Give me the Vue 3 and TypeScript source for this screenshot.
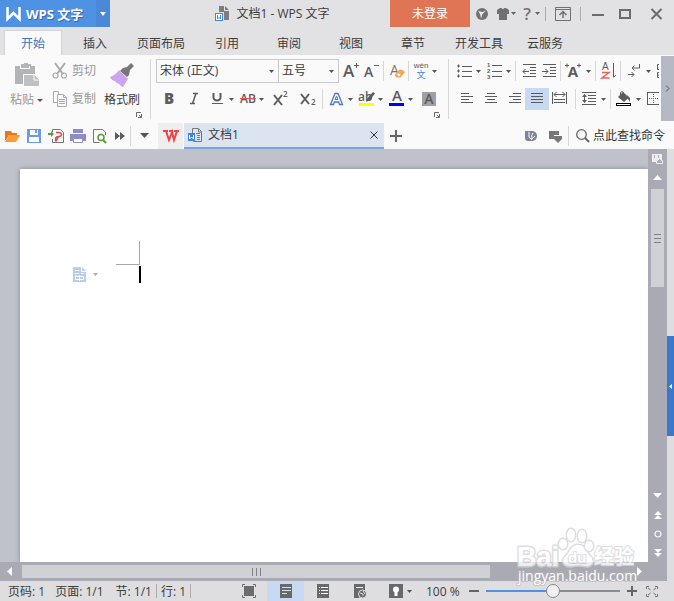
<script setup lang="ts">
import { computed, ref } from 'vue'

interface Tool {
  icon: string
  label: string
  gap: number
  active?: boolean
  menu?: boolean
  menuGap?: number
  sepAfter?: number
}

const g = '#5c5c5e'

const line = (x1: number, y: number, x2: number, c = g) =>
  `<rect x="${x1}" y="${y}" width="${x2 - x1}" height="1" fill="${c}"/>`

const icons: Record<string, string> = {
  grow: `<text x="0" y="14" font-family="Open Sans" font-weight="600" font-size="17" fill="${g}">A</text><path d="M13.500 0v5M11 2.500h5" stroke="${g}"/>`,
  shrink: `<text x="1" y="14" font-family="Open Sans" font-weight="600" font-size="14" fill="${g}">A</text><path d="M11 2.500h5" stroke="${g}"/>`,
  erase: `<text x="0" y="12" font-family="Open Sans" font-size="14" fill="#777">A</text><path d="M4.500 12l5-5.500 3 .5 2.500 2-4.500 5.500h-4z" fill="#f2a65a"/><path d="M7 11.500L8.500 10l2 2L9 13.500z" fill="#fff"/>`,
  pinyin: `<text x="8" y="5" text-anchor="middle" font-family="Liberation Sans" font-size="8" fill="${g}">wén</text><text x="8" y="15" text-anchor="middle" font-family="Noto Sans CJK SC" font-size="9" fill="#3f86e0">文</text>`,
  bold: `<text x="9" y="13" text-anchor="middle" font-family="Open Sans" font-weight="800" font-size="15" fill="${g}">B</text>`,
  italic: `<path d="M7 2.500h5M4 12.500h5M10 2.500l-3.500 10" stroke="${g}" stroke-width="1.500"/>`,
  underline: `<path d="M3.500 2v4.500a3.500 3 0 0 0 7 0V2" fill="none" stroke="${g}" stroke-width="2"/><rect x="2" y="12" width="11" height="1" fill="${g}"/>`,
  strike: `<text x="8" y="12" text-anchor="middle" font-family="Open Sans" font-weight="600" font-size="12" fill="${g}">AB</text><rect y="7" width="16" height="1" fill="#f05050"/>`,
  sup: `<path d="M2 4l8 10M10 4L2 14" stroke="${g}" stroke-width="2"/><text x="11" y="6" font-family="Open Sans" font-weight="600" font-size="8" fill="${g}">2</text>`,
  sub: `<path d="M1 3l8 10M9 3L1 13" stroke="${g}" stroke-width="2"/><text x="11" y="14" font-family="Open Sans" font-weight="600" font-size="8" fill="${g}">2</text>`,
  effect: `<path d="M1.500 13.500L6 2.500h3l4.500 11h-3L9.700 11H5.300l-.8 2.500z" fill="#fff" stroke="#4a76d0" stroke-width="1.300"/><path d="M6 8.500h3L7.500 5z" fill="#fff" stroke="#4a76d0"/>`,
  highlight: `<text x="-1" y="10" font-family="Open Sans" font-weight="600" font-size="12" fill="${g}">ab</text><path d="M7 11l1.500-4 5.500-6 2 1.500-5 6.500z" fill="${g}"/><rect y="12" width="15" height="3" fill="#ff0"/>`,
  color: `<text x="8" y="10" text-anchor="middle" font-family="Open Sans" font-weight="600" font-size="15" fill="${g}">A</text><rect y="12" width="15" height="3" fill="#00f"/>`,
  shade: `<rect x="1" y="1" width="14" height="14" fill="#9fa1a6"/><text x="8" y="13" text-anchor="middle" font-family="Open Sans" font-weight="600" font-size="14" fill="${g}">A</text>`,
  bullets: `<path d="M0 3h3M0 8h3M0 13h3M1.500 1.500v3M1.500 6.500v3M1.500 11.500v3" stroke="${g}"/>${line(5, 3, 15)}${line(5, 8, 15)}${line(5, 13, 15)}`,
  numbers: `<g font-family="Liberation Sans" font-weight="700" font-size="6" fill="${g}"><text y="4">1</text><text y="10">2</text><text y="16">3</text></g>${line(5, 2, 15)}${line(5, 8, 15)}${line(5, 13, 15)}`,
  outdent: `${line(1, 1, 14)}${line(8, 4, 14)}${line(8, 7, 14)}${line(8, 10, 14)}${line(1, 13, 14)}<path d="M1 8.500h6M3.500 6L1 8.500 3.500 11" fill="none" stroke="${g}"/>`,
  indent: `${line(1, 1, 14)}${line(8, 4, 14)}${line(8, 7, 14)}${line(8, 10, 14)}${line(1, 13, 14)}<path d="M0 8.500h6M3.500 6L6 8.500 3.500 11" fill="none" stroke="${g}"/>`,
  scale: `<text x="8" y="14" text-anchor="middle" font-family="Open Sans" font-weight="700" font-size="15" fill="${g}">A</text><path d="M0 2.500h4M2 .5v4M12 2.500h4M14 .5v4" stroke="${g}"/>`,
  sort: `<text x="2" y="7" font-family="Liberation Sans" font-size="10" fill="${g}">A</text><path d="M2 9.500h7l-7 5.500h7.500" fill="none" stroke="#ee5f5b" stroke-width="1.500"/><path d="M13.500 0v14M13.500 14.500l2.500-2.500" stroke="${g}"/>`,
  marks: `<path d="M12.500 1v4H5M7.500 2.500L5 5l2.500 2.500M1 11.500h6M4.500 9L7 11.500 4.500 14" fill="none" stroke="${g}"/>`,
  clip: `<path d="M4 1.500H.5v5H4M4 9.500H.5v5H4M1 12h3" fill="none" stroke="${g}"/>`,
  left: `${line(2, 2, 10)}${line(2, 5, 14)}${line(2, 8, 10)}${line(2, 11, 14)}`,
  center: `${line(4, 2, 12)}${line(2, 5, 14)}${line(4, 8, 12)}${line(2, 11, 14)}`,
  right: `${line(6, 2, 14)}${line(2, 5, 14)}${line(6, 8, 14)}${line(2, 11, 14)}`,
  justify: `${line(2, 2, 14)}${line(2, 5, 14)}${line(2, 8, 14)}${line(2, 11, 14)}`,
  spread: `<path d="M1.500 1v12M15.500 1v12M3 3.500h11M5.500 1L3 3.500 5.500 6M11.500 1L14 3.500 11.500 6M3 8.500h11M3 11.500h11" fill="none" stroke="${g}"/>`,
  spacing: `<path d="M0 1.500h14M6 4.500h8M6 7.500h8M6 10.500h8M0 13.500h14M2.500 3.500v8" stroke="${g}"/><path d="M0 6l2.500-3L5 6zM0 9l2.500 3L5 9z" fill="${g}"/>`,
  fill: `<path d="M3 6l5-5 6 5.500L9 11z" fill="${g}"/><path d="M5.500 5V1.500Q7-.5 8.500 1.500V5" fill="none" stroke="${g}"/><path d="M12 4l3 3v4l-2-3z" fill="${g}"/><rect x="1.500" y="12.500" width="14" height="2" fill="#fff" stroke="#000"/>`,
  border: `<rect x="2.500" y="1.500" width="12" height="12" fill="none" stroke="${g}"/><path d="M8.500 3v9M4 7.500h9" stroke="${g}" stroke-dasharray="1 1"/>`,
  paste: `<path d="M0 3h6V1h3V0h4v1h3v2h4v8h-8v10H0z" fill="#b3b4b5"/><path d="M5 3h10v3H5z" fill="#fff"/><path d="M6 2h8v3H6z" fill="#b3b4b5"/><path d="M8.500 11.500h11l5 5v7h-16z" fill="#bfc0c1" stroke="#fff"/><path d="M19 12v5h5" fill="none" stroke="#fff"/>`,
  painter: `<path d="M13 5l4-1 4-4 3 3-4 4-1 5-2 2-7-6z" fill="#777779"/><path d="M9 7l9 9-5 8q-3-1-4-3-2 0-4-3-3 0-5-4 6-2 9-7z" fill="#cda4f0"/>`,
  cut: `<path d="M3 0l8 11M13 0L5 11" stroke="#aaa" stroke-width="2"/><circle cx="3.500" cy="12.500" r="2.500" fill="none" stroke="#aaa" stroke-width="1.200"/><circle cx="12" cy="12.500" r="2.500" fill="none" stroke="#aaa" stroke-width="1.200"/>`,
  copy: `<path d="M6.500 3V.5h-5v11h4" fill="none" stroke="#aaa"/><path d="M5.500 3.500h6l3 3v9h-9zM11.500 3.500v3h3M7 8.500h6M7 10.500h6M7 12.500h6" fill="none" stroke="#aaa"/>`,
  open: `<path d="M1 3h6l1 2h5v2H5l-3 5H1z" fill="#e8791a"/><path d="M5 7h11l-4 7H1z" fill="#ff9a3d"/>`,
  save: `<path d="M1 1h14v14H1z" fill="#6b9be8"/><path d="M4 2h8v5H4zM3 9h10v5H3z" fill="#fff"/><path d="M9 2h2v3H9z" fill="#6b9be8"/>`,
  pdf: `<path d="M4.500 4V1.500h8l3 3v10h-11V11" fill="none" stroke="#777"/><path d="M0 5h3V3l3 3-3 3V7H0z" fill="#5a9a3c"/><path d="M8 4.500h2.500q3 0 3 2t-3 2-3 3 1.500 0 1.500-3" fill="none" stroke="#e04848" stroke-width="1.400"/>`,
  print: `<path d="M3 1h10v4H3zM0 6h16v7h-3v-2H3v2H0z" fill="#8f8bc9"/><path d="M3.500 10.500h9v4h-9z" fill="#fff" stroke="#8f8bc9"/>`,
  preview: `<path d="M13.500 7V4l-3-2.500H1.500v13h6" fill="none" stroke="#777"/><circle cx="9" cy="9.500" r="3" fill="#fff" stroke="#5a9a3c" stroke-width="1.500"/><path d="M11 12l3 3" stroke="#5a9a3c" stroke-width="2"/>`,
  more: `<path d="M1 4l5 4-5 4zM6 4l5 4-5 4z" fill="${g}"/>`,
  flag: `<path d="M1 3h8q4 1 4 5t-4 5H4q-3 0-3-3z" fill="#80849a"/><path d="M5 4v5l3 3M9 5q-2 2-1 6l3-3" stroke="#fff" fill="none"/>`,
  feedback: `<path d="M1 3h10v4H6v4H1z" fill="#777"/><path d="M6 8h8v3l-4 4-4-4z" fill="#777"/>`,
  search: `<circle cx="6.500" cy="6.500" r="4.800" fill="none" stroke="#666" stroke-width="1.300"/><path d="M10 10l4 4" stroke="#666" stroke-width="2"/>`,
  plus: `<path d="M2 8h12M8 2v12" stroke="#666" stroke-width="2"/>`,
  swirl: `<circle cx="8" cy="8" r="6" fill="#727275"/><path d="M4 5l4.500 1L12 4.500 8.500 8 7 12.500 6 8z" fill="#e8e8ea"/>`,
  shirt: `<path d="M0 4l3-2h1.500q1.500 2 3 0H9l3 2v4h-2v6H2V8H0z" fill="#707072"/>`,
  help: `<text x="6" y="14" text-anchor="middle" font-family="Open Sans" font-weight="600" font-size="17" fill="#747476">?</text>`,
  collapse: `<path d="M1.500 1.500h15v13h-15zM1 3.500h16" fill="none" stroke="#707072"/><path d="M9 12V6M5.500 9L9 5.500 12.500 9" fill="none" stroke="#707072" stroke-width="1.500"/>`,
  min: `<rect x="1" y="8" width="12" height="2" fill="#6c6c6e"/>`,
  max: `<rect x="3" y="4" width="10" height="8" fill="none" stroke="#6c6c6e" stroke-width="2"/>`,
  close: `<path d="M2.500 3l10 10M12.500 3l-10 10" stroke="#6c6c6e" stroke-width="2"/>`,
  full: `<path d="M1.500 4V1.500H4M12 1.500h2.500V4M14.500 12v2.500H12M4 14.500H1.500V12" fill="none" stroke="#6c6c6e"/><path d="M3 3h10v10H3z" fill="#6c6c6e"/>`,
  page: `<path d="M2 1h12v14H2z" fill="#68696b"/><path d="M4 4.500h9M4 7.500h9M4 10.500h5" stroke="#d5e3f6"/>`,
  outline: `<path d="M2 1h12v14H2z" fill="#68696b"/><path d="M4 4.500h1M6 4.500h7M4 7.500h1M6 7.500h7M4 10.500h1M6 10.500h7" stroke="#fff"/>`,
  web: `<path d="M2 1h11v6l-6 8H2z" fill="#68696b"/><path d="M4 4.500h7" stroke="#eee"/><circle cx="10.500" cy="11" r="4" fill="#68696b" stroke="#e0e0e2"/><path d="M8 10l3 1v2M11 8l2 3" stroke="#e0e0e2" fill="none"/>`,
  bulb: `<path d="M1 1h14v14H1z" fill="#68696b"/><circle cx="8" cy="6.500" r="3" fill="#fff"/><path d="M6.500 9h3v4h-3z" fill="#fff"/>`,
  expand: `<path d="M2.500 6V3.500H5M11 3.500h2.500V6M13.500 11v2.500H11M5 13.500H2.500V11M4 5l2.500 2M12 5L9.500 7M12 12l-2.500-2M4 12l2.500-2" fill="none" stroke="#707073"/>`,
}

const tabs = ['开始', '插入', '页面布局', '引用', '审阅', '视图', '章节', '开发工具', '云服务']
const activeTab = ref('开始')

const fontTop: Tool[] = [
  { icon: 'grow', label: '增大字号', gap: 4 },
  { icon: 'shrink', label: '减小字号', gap: 4, sepAfter: 4 },
  { icon: 'erase', label: '清除格式', gap: 6, sepAfter: 2 },
  { icon: 'pinyin', label: '拼音指南', gap: 4, menu: true },
]
const fontBottom: Tool[] = [
  { icon: 'bold', label: '加粗', gap: 4 },
  { icon: 'italic', label: '倾斜', gap: 10 },
  { icon: 'underline', label: '下划线', gap: 8, menu: true },
  { icon: 'strike', label: '删除线', gap: 4, menu: true },
  { icon: 'sup', label: '上标', gap: 6 },
  { icon: 'sub', label: '下标', gap: 12, sepAfter: 6 },
  { icon: 'effect', label: '文字效果', gap: 6, menu: true },
  { icon: 'highlight', label: '突出显示', gap: 4, menu: true },
  { icon: 'color', label: '字体颜色', gap: 4, menu: true },
  { icon: 'shade', label: '字符底纹', gap: 6 },
]
const paraTop: Tool[] = [
  { icon: 'bullets', label: '项目符号', gap: 8, menu: true },
  { icon: 'numbers', label: '编号', gap: 4, menu: true, sepAfter: 2 },
  { icon: 'outdent', label: '减少缩进', gap: 6 },
  { icon: 'indent', label: '增加缩进', gap: 4, sepAfter: 2 },
  { icon: 'scale', label: '中文版式', gap: 4, menu: true, menuGap: 2, sepAfter: 2 },
  { icon: 'sort', label: '排序', gap: 4, sepAfter: 4 },
  { icon: 'marks', label: '显示标记', gap: 6, menu: true },
  { icon: 'clip', label: '制表位', gap: 4 },
]
const paraBottom: Tool[] = [
  { icon: 'left', label: '左对齐', gap: 10 },
  { icon: 'center', label: '居中', gap: 8 },
  { icon: 'right', label: '右对齐', gap: 8 },
  { icon: 'justify', label: '两端对齐', gap: 2, active: true },
  { icon: 'spread', label: '分散对齐', gap: 2, sepAfter: 8 },
  { icon: 'spacing', label: '行距', gap: 6, menu: true, sepAfter: 2 },
  { icon: 'fill', label: '底纹颜色', gap: 4, menu: true, menuGap: 2 },
  { icon: 'border', label: '边框', gap: 2 },
]
const fontRows = [fontTop, fontBottom]
const paraRows = [paraTop, paraBottom]

const quick = [
  { icon: 'open', label: '打开' },
  { icon: 'save', label: '保存' },
  { icon: 'pdf', label: '输出为PDF' },
  { icon: 'print', label: '打印' },
  { icon: 'preview', label: '打印预览' },
  { icon: 'more', label: '更多' },
]

const views = [
  { icon: 'full', label: '全屏显示' },
  { icon: 'page', label: '页面视图' },
  { icon: 'outline', label: '大纲视图' },
  { icon: 'web', label: 'Web版式' },
]
const view = ref('page')

const fontName = ref('宋体 (正文)')
const fontSize = ref('五号')
const zoom = ref(100)
const fillPct = computed(() => `${zoom.value / 2}%`)
</script>

<template>
  <div class="app">
    <header class="title">
      <button class="brand" type="button">
        <svg width="16" height="14" viewBox="0 0 16 14"><path d="M1.500 0v12l6-6 6 6V0" fill="none" stroke="#fff" stroke-width="2.500" /></svg>
        <span>WPS 文字</span>
      </button>
      <button class="brand-menu" type="button" aria-label="主菜单">
        <svg width="6" height="4" viewBox="0 0 6 4"><path d="M0 0h6L3 4z" fill="#fff" /></svg>
      </button>
      <h1>
        <svg width="16" height="16" viewBox="0 0 16 16">
          <path d="M4 0h5v5h5v9H9V6H4z" fill="#7d7d80" /><path d="M10 0l4 4h-4z" fill="#7d7d80" />
          <rect x=".5" y="7.500" width="7" height="7" fill="#fff" stroke="#3f86e0" />
          <path d="M2.500 9v4L4 11.500 5.500 13V9" fill="none" stroke="#3f86e0" />
        </svg>
        <span>文档1 - WPS 文字</span>
      </h1>
      <button class="login" type="button">未登录</button>
      <button class="ico g4" type="button" aria-label="在线"><svg width="16" height="16" v-html="icons.swirl" /></button>
      <button class="ico g7" type="button" aria-label="皮肤"><svg width="12" height="16" v-html="icons.shirt" /></button>
      <button class="caret narrow" type="button" aria-label="皮肤菜单"><svg width="5" height="3"><path d="M0 0h5L2.500 3z" fill="#666" /></svg></button>
      <button class="ico g4" type="button" aria-label="帮助"><svg width="12" height="16" v-html="icons.help" /></button>
      <button class="caret narrow" type="button" aria-label="帮助菜单"><svg width="5" height="3"><path d="M0 0h5L2.500 3z" fill="#666" /></svg></button>
      <i class="bar g4" />
      <button class="ico g8" type="button" aria-label="折叠功能区"><svg width="18" height="16" v-html="icons.collapse" /></button>
      <i class="bar g8" />
      <button class="ico g10" type="button" aria-label="最小化"><svg width="16" height="16" v-html="icons.min" /></button>
      <button class="ico g10" type="button" aria-label="最大化"><svg width="16" height="16" v-html="icons.max" /></button>
      <button class="ico g16 last" type="button" aria-label="关闭"><svg width="16" height="16" v-html="icons.close" /></button>
    </header>

    <nav class="tabs">
      <button v-for="t in tabs" :key="t" type="button" :class="{ on: t === activeTab }" @click="activeTab = t">{{ t }}</button>
    </nav>

    <section class="ribbon">
      <div class="group">
        <div class="clip">
          <button class="big muted" type="button">
            <svg width="24" height="24" v-html="icons.paste" />
            <span class="lbl">粘贴<svg width="10" height="3"><path d="M3 0h6L6 3z" fill="#555" /></svg></span>
          </button>
          <div class="pair">
            <button class="small muted" type="button"><svg width="16" height="16" v-html="icons.cut" />剪切</button>
            <button class="small muted" type="button"><svg width="16" height="16" v-html="icons.copy" />复制</button>
          </div>
          <button class="big" type="button">
            <svg width="24" height="24" v-html="icons.painter" />
            <span class="lbl">格式刷</span>
          </button>
        </div>
        <button class="launch" type="button" aria-label="剪贴板选项"><svg width="6" height="6"><path d="M5 .5H.5V5M2 5.500h3.500V2M3 3l2 2" fill="none" stroke="#667" /></svg></button>
      </div>

      <div class="group font">
        <div v-for="(row, r) in fontRows" :key="r" class="row">
          <div v-if="r === 0" class="combos">
            <div class="combo wide">
              <select v-model="fontName" aria-label="字体"><option>宋体 (正文)</option><option>黑体</option></select>
              <svg width="5" height="3"><path d="M0 0h5L2.500 3z" fill="#555" /></svg>
            </div>
            <div class="combo">
              <select v-model="fontSize" aria-label="字号"><option>五号</option><option>四号</option></select>
              <svg width="5" height="3"><path d="M0 0h5L2.500 3z" fill="#555" /></svg>
            </div>
          </div>
          <template v-for="t in row" :key="t.icon">
            <button class="ico" :class="['g' + t.gap, { active: t.active }]" type="button" :aria-label="t.label"><svg width="16" height="16" v-html="icons[t.icon]" /></button>
            <button v-if="t.menu" class="caret" type="button" :aria-label="t.label + '菜单'"><svg width="5" height="3"><path d="M0 0h5L2.500 3z" fill="#555" /></svg></button>
            <i v-if="t.sepAfter" class="sep" :class="'g' + t.sepAfter" />
          </template>
        </div>
        <button class="launch" type="button" aria-label="字体选项"><svg width="6" height="6"><path d="M5 .5H.5V5M2 5.500h3.500V2M3 3l2 2" fill="none" stroke="#667" /></svg></button>
      </div>

      <div class="group para">
        <div v-for="(row, r) in paraRows" :key="r" class="row">
          <template v-for="t in row" :key="t.icon">
            <button class="ico" :class="['g' + t.gap, { active: t.active }]" type="button" :aria-label="t.label"><svg width="16" height="16" v-html="icons[t.icon]" /></button>
            <button v-if="t.menu" class="caret" :class="'g' + (t.menuGap ?? 0)" type="button" :aria-label="t.label + '菜单'"><svg width="5" height="3"><path d="M0 0h5L2.500 3z" fill="#555" /></svg></button>
            <i v-if="t.sepAfter" class="sep" :class="'g' + t.sepAfter" />
          </template>
        </div>
      </div>
      <button class="more" type="button" aria-label="更多工具"><svg width="5" height="7"><path d="M1 .5l3 3-3 3" fill="none" stroke="#555" /></svg></button>
    </section>

    <section class="quick">
      <div class="qtools">
        <button v-for="q in quick" :key="q.icon" class="ico" type="button" :aria-label="q.label"><svg width="16" height="16" v-html="icons[q.icon]" /></button>
      </div>
      <i class="sep" />
      <button class="qmenu" type="button" aria-label="自定义"><svg width="9" height="5"><path d="M0 0h9L4.500 5z" fill="#555" /></svg></button>
      <button class="home" type="button" aria-label="首页"><svg width="16" height="12"><path d="M0 1h5M11 1h5M3 1l3 9 3-8 2 8 3-9M6 1h4" fill="none" stroke="#ee4248" stroke-width="2" /></svg></button>
      <div class="doc">
        <svg width="16" height="16" viewBox="0 0 16 16">
          <path d="M4.500 6V1.500h6l3 3v10h-8M10.500 2v3h3M8 6.500h4M9 8.500h3M9 10.500h3M9 12.500h3" fill="none" stroke="#777" />
          <rect y="6" width="7" height="8" fill="#3f86e0" /><path d="M1.500 8v4l2-2 2 2V8" fill="none" stroke="#fff" />
        </svg>
        <span>文档1</span>
        <button type="button" aria-label="关闭文档1"><svg width="8" height="8"><path d="M.5.5l7 7M7.500.5l-7 7" stroke="#333" /></svg></button>
      </div>
      <button class="ico g4" type="button" aria-label="新建"><svg width="16" height="16" v-html="icons.plus" /></button>
      <div class="find">
        <button class="ico" type="button" aria-label="文档漫游"><svg width="16" height="16" v-html="icons.flag" /></button>
        <button class="ico g8" type="button" aria-label="反馈"><svg width="16" height="16" v-html="icons.feedback" /></button>
        <i class="sep g4" />
        <label for="command"><svg width="16" height="16" v-html="icons.search" /></label>
        <input id="command" type="text" placeholder="点此查找命令" aria-label="查找命令">
      </div>
    </section>

    <main class="work">
      <div class="left">
        <div class="canvas">
          <article class="page">
            <div class="corner" />
            <div class="firstline">
              <button type="button" aria-label="段落选项">
                <svg width="14" height="16"><path d="M0 0h9l4 4v11H0z" fill="#b9cdec" /><path d="M8.500 0v4.500H13M2 3.500h4M2 6.500h4M8 6.500h3M2 9h2" fill="none" stroke="#fff" /><path d="M2.500 9.500h8v3h-8zM6.500 8v6" fill="none" stroke="#fff" /></svg>
                <svg width="5" height="3"><path d="M0 0h5L2.500 3z" fill="#aaa" /></svg>
              </button>
              <span class="cursor" />
            </div>
          </article>
        </div>
        <div class="hscroll">
          <button type="button" aria-label="向左滚动"><svg width="5" height="9"><path d="M5 0v9L0 4.500z" fill="#fff" /></svg></button>
          <div class="htrack"><div class="hthumb"><i /><i /><i /></div></div>
          <button type="button" aria-label="向右滚动"><svg width="5" height="9"><path d="M0 0v9l5-4.500z" fill="#fff" /></svg></button>
        </div>
        <svg class="mark" width="124" height="56" viewBox="0 0 124 56">
          <g fill="#fff" stroke="#d6d6d9" stroke-width="3" stroke-linejoin="round" paint-order="stroke" opacity=".8">
            <text x="1" y="41" font-family="Liberation Sans" font-weight="700" font-size="27">Bai</text>
            <path d="M62 20c8 0 8 8 13 12 4 5 0 10-5 9-6-1-10-1-14 0-8 1-11-5-7-9 5-4 5-12 13-12z" />
            <ellipse cx="47" cy="19" rx="4" ry="5" /><ellipse cx="55" cy="10" rx="4" ry="6" /><ellipse cx="66" cy="11" rx="4" ry="6" /><ellipse cx="73" cy="21" rx="4" ry="5" />
            <text x="52" y="38" font-family="Liberation Sans" font-weight="700" font-size="15" stroke-width="2">du</text>
            <text x="78" y="39" font-family="Noto Sans CJK SC" font-weight="700" font-size="20" stroke-width="2">经验</text>
          </g>
          <text x="2" y="56" font-family="Open Sans" font-size="14" fill="#fff" stroke="#b4b4b9" stroke-width="2" paint-order="stroke" stroke-opacity=".6">jingyan.baidu.com</text>
        </svg>
      </div>
      <div class="vscroll">
        <button type="button" aria-label="标尺"><svg width="12" height="12"><path d="M0 1h10v8H0z" fill="#eee" /><path d="M2.500 2v3M6.500 2v3" stroke="#a9aab3" /><path d="M4.500 10.500v-3h1l2-2 2 2h1v3z" fill="#a9aab3" stroke="#eee" /></svg></button>
        <button type="button" aria-label="向上滚动"><svg width="9" height="5"><path d="M0 5h9L4.500 0z" fill="#fff" /></svg></button>
        <div class="vtrack"><div class="vthumb"><i /><i /><i /></div></div>
        <button type="button" aria-label="向下滚动"><svg width="9" height="5"><path d="M0 0h9L4.500 5z" fill="#fff" /></svg></button>
        <button type="button" aria-label="上一页"><svg width="8" height="8"><path d="M0 4h8L4 0zM0 8h8L4 4z" fill="#fff" /></svg></button>
        <button type="button" aria-label="选择浏览对象"><svg width="8" height="8"><circle cx="4" cy="4" r="3" fill="none" stroke="#fff" stroke-width="1.200" /></svg></button>
        <button type="button" aria-label="下一页"><svg width="8" height="8"><path d="M0 0h8L4 4zM0 4h8L4 8z" fill="#fff" /></svg></button>
        <div class="notch" />
      </div>
      <aside class="side"><button type="button" aria-label="展开任务窗格"><svg width="3" height="5"><path d="M3 0v5L0 2.500z" fill="#fff" /></svg></button></aside>
    </main>

    <footer class="status">
      <span>页码: 1</span><span class="g10">页面: 1/1</span><span class="g12">节: 1/1</span><i class="bar g4" />
      <span class="g4">行: 1</span><i class="bar g4" />
      <div class="tools">
        <button v-for="v in views" :key="v.icon" class="view" :class="{ on: v.icon === view }" type="button" :aria-label="v.label" @click="view = v.icon"><svg width="16" height="16" v-html="icons[v.icon]" /></button>
        <button class="ico g10" type="button" aria-label="护眼模式"><svg width="16" height="16" v-html="icons.bulb" /></button>
        <button class="caret" type="button" aria-label="护眼菜单"><svg width="5" height="3"><path d="M0 0h5L2.500 3z" fill="#555" /></svg></button>
        <output class="pct" for="zoom">{{ zoom }} %</output>
        <button class="ico g4" type="button" aria-label="缩小" @click="zoom = Math.max(0, zoom - 10)"><svg width="12" height="12"><path d="M1 6h10" stroke="#666" stroke-width="2" /></svg></button>
        <input id="zoom" v-model.number="zoom" type="range" min="0" max="200" aria-label="显示比例" :style="{ '--fill': fillPct }">
        <button class="ico" type="button" aria-label="放大" @click="zoom = Math.min(200, zoom + 10)"><svg width="12" height="12"><path d="M1 6h10M6 1v10" stroke="#666" stroke-width="2" /></svg></button>
        <button class="ico g6" type="button" aria-label="最佳显示"><svg width="16" height="16" v-html="icons.expand" /></button>
      </div>
    </footer>
  </div>
</template>

<style>
body {
  margin: 0;
}
</style>

<style scoped>
.app {
  display: flex;
  flex-direction: column;
  height: 100vh;
  overflow: hidden;
  background: #fafafa;
  color: #3c3c3e;
  font: 12px/16px "Open Sans", "Noto Sans CJK SC", sans-serif;
}
.app * {
  box-sizing: border-box;
}
button {
  display: flex;
  flex: none;
  align-items: center;
  justify-content: center;
  margin: 0;
  padding: 0;
  border: 0;
  background: none;
  color: inherit;
  font: inherit;
  white-space: nowrap;
}
svg {
  display: block;
  flex: none;
  overflow: visible;
}
.g2 { margin-left: 2px; }
.g4 { margin-left: 4px; }
.g6 { margin-left: 6px; }
.g7 { margin-left: 7px; }
.g8 { margin-left: 8px; }
.g10 { margin-left: 10px; }
.g12 { margin-left: 12px; }
.g16 { margin-left: 16px; }
.caret {
  width: 10px;
  height: 16px;
}
.narrow {
  width: 8px;
}
.bar {
  flex: none;
  width: 1px;
  height: 14px;
  background: #adadb0;
}
.sep {
  flex: none;
  width: 1px;
  height: 20px;
  background: #d8d8da;
}
.title {
  display: flex;
  flex: none;
  align-items: center;
  height: 27px;
  background: #e2e2e4;
}
.brand {
  justify-content: flex-start;
  gap: 4px;
  width: 96px;
  height: 27px;
  padding-left: 6px;
  background: #4f92e3;
  color: #fff;
  font-weight: 700;
  font-size: 13px;
  text-shadow: 1px 1px 0 #3568ab;
}
.brand-menu {
  width: 14px;
  height: 27px;
  background: #4a89d6;
}
h1 {
  display: flex;
  flex: 1;
  align-items: center;
  justify-content: center;
  gap: 6px;
  margin: 0;
  padding-left: 44px;
  font-size: 12px;
  font-weight: 400;
  white-space: nowrap;
}
.login {
  width: 80px;
  height: 27px;
  background: #e07556;
  color: #fff;
}
.last {
  margin-right: 9px;
}
.tabs {
  display: flex;
  flex: none;
  align-items: flex-end;
  height: 28px;
  padding-left: 2px;
  background: #e2e2e4;
}
.tabs button {
  min-width: 62px;
  height: 25px;
  padding: 2px 11px 0;
}
.tabs .on {
  min-width: 58px;
  margin: 0 2px;
  padding-top: 1px;
  border: 1px solid #d3d4d7;
  border-bottom: 0;
  background: #fafafa;
  color: #3a75c4;
}
.ribbon {
  display: flex;
  flex: none;
  padding: 1px 0;
}
.group {
  flex: none;
  margin: 3px 0 2px;
  border-right: 1px solid #d8d8da;
}
.font {
  padding-left: 5px;
}
.font .row {
  padding-right: 9px;
}
.para {
  flex: 1;
  min-width: 0;
  margin-right: 2px;
  border: 0;
  overflow: hidden;
}
.row {
  display: flex;
  align-items: center;
  height: 24px;
}
.row + .row {
  margin-top: 4px;
}
.clip {
  display: flex;
  gap: 8px;
  padding: 0 10px;
}
.pair {
  display: flex;
  flex-direction: column;
  gap: 4px;
}
.small {
  gap: 4px;
  height: 24px;
}
.big {
  flex-direction: column;
  padding-top: 4px;
}
.lbl {
  display: flex;
  align-items: center;
  height: 24px;
  padding-top: 2px;
}
.muted {
  color: #98989a;
}
.launch {
  width: 6px;
  height: 8px;
  margin-left: auto;
  margin-right: 8px;
}
.active {
  width: 24px;
  height: 22px;
  background: #c8daf1;
}
.combos {
  display: flex;
}
.combo {
  display: flex;
  align-items: center;
  width: 61px;
  height: 24px;
  border: 1px solid #c9c9cc;
}
.wide {
  width: 122px;
  border-right: 0;
}
.combo select {
  flex: 1;
  min-width: 0;
  height: 22px;
  padding: 0 3px;
  border: 0;
  appearance: none;
  background: none;
  color: inherit;
  font: inherit;
}
.combo svg {
  margin-right: 4px;
}
.more {
  width: 13px;
  background: #b5b9c3;
}
.quick {
  display: flex;
  flex: none;
  align-items: center;
  height: 27px;
}
.qtools {
  display: flex;
  gap: 6px;
  padding-left: 4px;
}
.qmenu {
  width: 27px;
}
.home {
  width: 25px;
  height: 26px;
  margin-right: 1px;
  background: #eeeeef;
}
.doc {
  display: flex;
  flex: none;
  align-items: center;
  gap: 4px;
  width: 200px;
  height: 26px;
  padding: 0 6px 0 4px;
  border-bottom: 2px solid #78a3dc;
  background: #dbe4f0;
}
.doc button {
  margin-left: auto;
}
.find {
  display: flex;
  align-items: center;
  margin-left: auto;
}
.find label {
  margin-left: 6px;
}
.find input {
  width: 83px;
  padding: 0 0 0 2px;
  border: 0;
  background: none;
  color: #333;
  font: inherit;
}
.find input::placeholder {
  color: #333;
  opacity: 1;
}
.work {
  display: flex;
  flex: 1;
  min-height: 0;
}
.left {
  position: relative;
  display: flex;
  flex: 1;
  flex-direction: column;
  min-width: 0;
}
.canvas {
  flex: 1;
  min-height: 0;
  padding: 20px 0 0 20px;
  background: #bfc2cb;
  overflow: hidden;
}
.page {
  height: 100%;
  padding-top: 72px;
  background: #fff;
  box-shadow: 0 0 5px #85878f;
}
.corner {
  width: 24px;
  height: 24px;
  margin-left: 96px;
  border: solid #a8a8a8;
  border-width: 0 1px 1px 0;
}
.firstline {
  display: grid;
  grid-template-columns: 66px 2px;
  padding: 1px 0 0 53px;
}
.firstline button {
  justify-content: flex-start;
  gap: 6px;
}
.cursor {
  height: 17px;
  background: #000;
}
.hscroll {
  display: flex;
  flex: none;
  align-items: center;
  height: 19px;
  background: #a9aab3;
}
.hscroll button {
  width: 18px;
  height: 19px;
}
.htrack {
  flex: 1;
  padding-left: 4px;
}
.hthumb {
  display: flex;
  align-items: center;
  justify-content: center;
  gap: 3px;
  width: 77%;
  height: 13px;
  background: #d0d1d5;
}
.hthumb i {
  width: 1px;
  height: 8px;
  background: #808188;
}
.mark {
  position: absolute;
  right: 8px;
  bottom: 0;
  pointer-events: none;
}
.vscroll {
  display: flex;
  flex: none;
  flex-direction: column;
  width: 19px;
  background: #a9aab3;
}
.vscroll button {
  height: 19px;
}
.vtrack {
  flex: 1;
  padding: 2px 3px 0;
}
.vthumb {
  display: flex;
  flex-direction: column;
  align-items: center;
  justify-content: center;
  gap: 3px;
  height: 33%;
  background: #d0d1d5;
}
.vthumb i {
  width: 7px;
  height: 1px;
  background: #808188;
}
.notch {
  height: 19px;
}
.side {
  display: flex;
  flex: none;
  align-items: flex-end;
  width: 7px;
  padding-bottom: 145px;
  background: #dedee0;
}
.side button {
  width: 7px;
  height: 100px;
  background: #3b78cb;
}
.status {
  position: relative;
  display: flex;
  flex: none;
  align-items: center;
  height: 20px;
  padding-left: 8px;
  background: #dedee0;
  white-space: nowrap;
  z-index: 0;
}
.work {
  position: relative;
  z-index: 1;
}
.status span,
.pct {
  padding-top: 2px;
}
.tools {
  display: flex;
  align-items: center;
  margin-left: auto;
  padding-right: 14px;
}
.view {
  width: 37px;
  height: 20px;
}
.view.on {
  background: #c8daf1;
}
.pct {
  width: 38px;
  margin-left: 12px;
}
input[type="range"] {
  width: 146px;
  height: 16px;
  margin: 0;
  appearance: none;
  background: linear-gradient(90deg, #4f92e3 var(--fill), #8c8c90 var(--fill)) center / 134px 2px no-repeat;
}
input[type="range"]::-webkit-slider-thumb {
  width: 14px;
  height: 14px;
  border: 1px solid #88888c;
  border-radius: 50%;
  appearance: none;
  background: #f0f0f1;
}
</style>
